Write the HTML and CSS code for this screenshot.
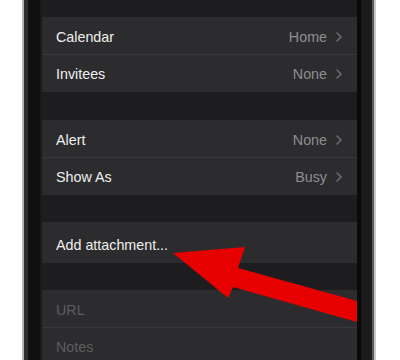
FILE: index.html
```html
<!DOCTYPE html>
<html>
<head>
<meta charset="utf-8">
<link rel="stylesheet" href="styles.css">
</head>
<body>
<div class="device">
  <div class="bezel-left"></div>
  <div class="screen">
    <div class="group">
      <div class="row"><span class="label">Calendar</span><span class="value">Home<svg class="chev" width="6" height="10" viewBox="0 0 6 10"><path d="M1 1 L5 5 L1 9" fill="none" stroke="#6f6f74" stroke-width="1.5" stroke-linecap="round" stroke-linejoin="round"/></svg></span></div>
      <div class="row sep"><span class="label">Invitees</span><span class="value">None<svg class="chev" width="6" height="10" viewBox="0 0 6 10"><path d="M1 1 L5 5 L1 9" fill="none" stroke="#6f6f74" stroke-width="1.5" stroke-linecap="round" stroke-linejoin="round"/></svg></span></div>
    </div>
    <div class="group g2">
      <div class="row"><span class="label">Alert</span><span class="value">None<svg class="chev" width="6" height="10" viewBox="0 0 6 10"><path d="M1 1 L5 5 L1 9" fill="none" stroke="#6f6f74" stroke-width="1.5" stroke-linecap="round" stroke-linejoin="round"/></svg></span></div>
      <div class="row sep"><span class="label">Show As</span><span class="value">Busy<svg class="chev" width="6" height="10" viewBox="0 0 6 10"><path d="M1 1 L5 5 L1 9" fill="none" stroke="#6f6f74" stroke-width="1.5" stroke-linecap="round" stroke-linejoin="round"/></svg></span></div>
    </div>
    <div class="group g3">
      <div class="row tall"><span class="label">Add attachment...</span></div>
    </div>
    <div class="group g3">
      <div class="row"><span class="placeholder">URL</span></div>
      <div class="row sep"><span class="placeholder">Notes</span></div>
    </div>
    <svg class="arrow" width="315" height="360" viewBox="0 0 315 360">
      <polygon points="131,253 203,247 196,268 315,301 315,322 191,287 186,298" fill="#e60000"/>
    </svg>
  </div>
  <div class="bezel-right"></div>
</div>
</body>
</html>
```
FILE: styles.css
```css
html, body {
  margin: 0;
  padding: 0;
  background: #ffffff;
}
body {
  width: 400px;
  height: 360px;
  overflow: hidden;
  font-family: "Liberation Sans", Arial, sans-serif;
}
.device {
  display: flex;
  margin-left: 22px;
  width: 354px;
  height: 360px;
}
.bezel-left {
  width: 20px;
  flex: none;
  background: linear-gradient(to right, #b4b4b4 0, #b4b4b4 2px, #2e2e2e 2px, #2e2e2e 6px, #0f0f0f 6px, #0f0f0f 18px, #1a1a1a 18px);
}
.bezel-right {
  width: 19px;
  flex: none;
  background: linear-gradient(to right, #0a0a0a 0, #0a0a0a 4px, #1b1b1b 4px, #1b1b1b 15px, #5a5a5a 15px, #5a5a5a 17px, #c8c8c8 17px);
}
.screen {
  position: relative;
  width: 315px;
  flex: none;
  height: 360px;
  overflow: hidden;
  background: #1d1d1f;
  padding-top: 17px;
  box-sizing: border-box;
  display: flex;
  flex-direction: column;
}
.group {
  background: #2c2c2e;
  display: flex;
  flex-direction: column;
  flex: none;
}
.g2 {
  margin-top: 28px;
}
.g3 {
  margin-top: 27px;
}
.row {
  height: 37px;
  display: flex;
  align-items: center;
  justify-content: space-between;
  padding: 2px 15px 0 14px;
  box-sizing: border-box;
  font-size: 14.3px;
}
.row.sep {
  height: 38px;
  padding-top: 0;
  border-top: 1px solid #38383a;
}
.row.tall {
  height: 41px;
  padding-top: 5px;
}
.label {
  color: #efefef;
}
.placeholder {
  color: #5d5d61;
}
.value {
  color: #8e8e93;
  display: flex;
  align-items: center;
}
.chev {
  display: block;
  margin-left: 9px;
}
.arrow {
  position: absolute;
  left: 0;
  top: 0;
}
```
